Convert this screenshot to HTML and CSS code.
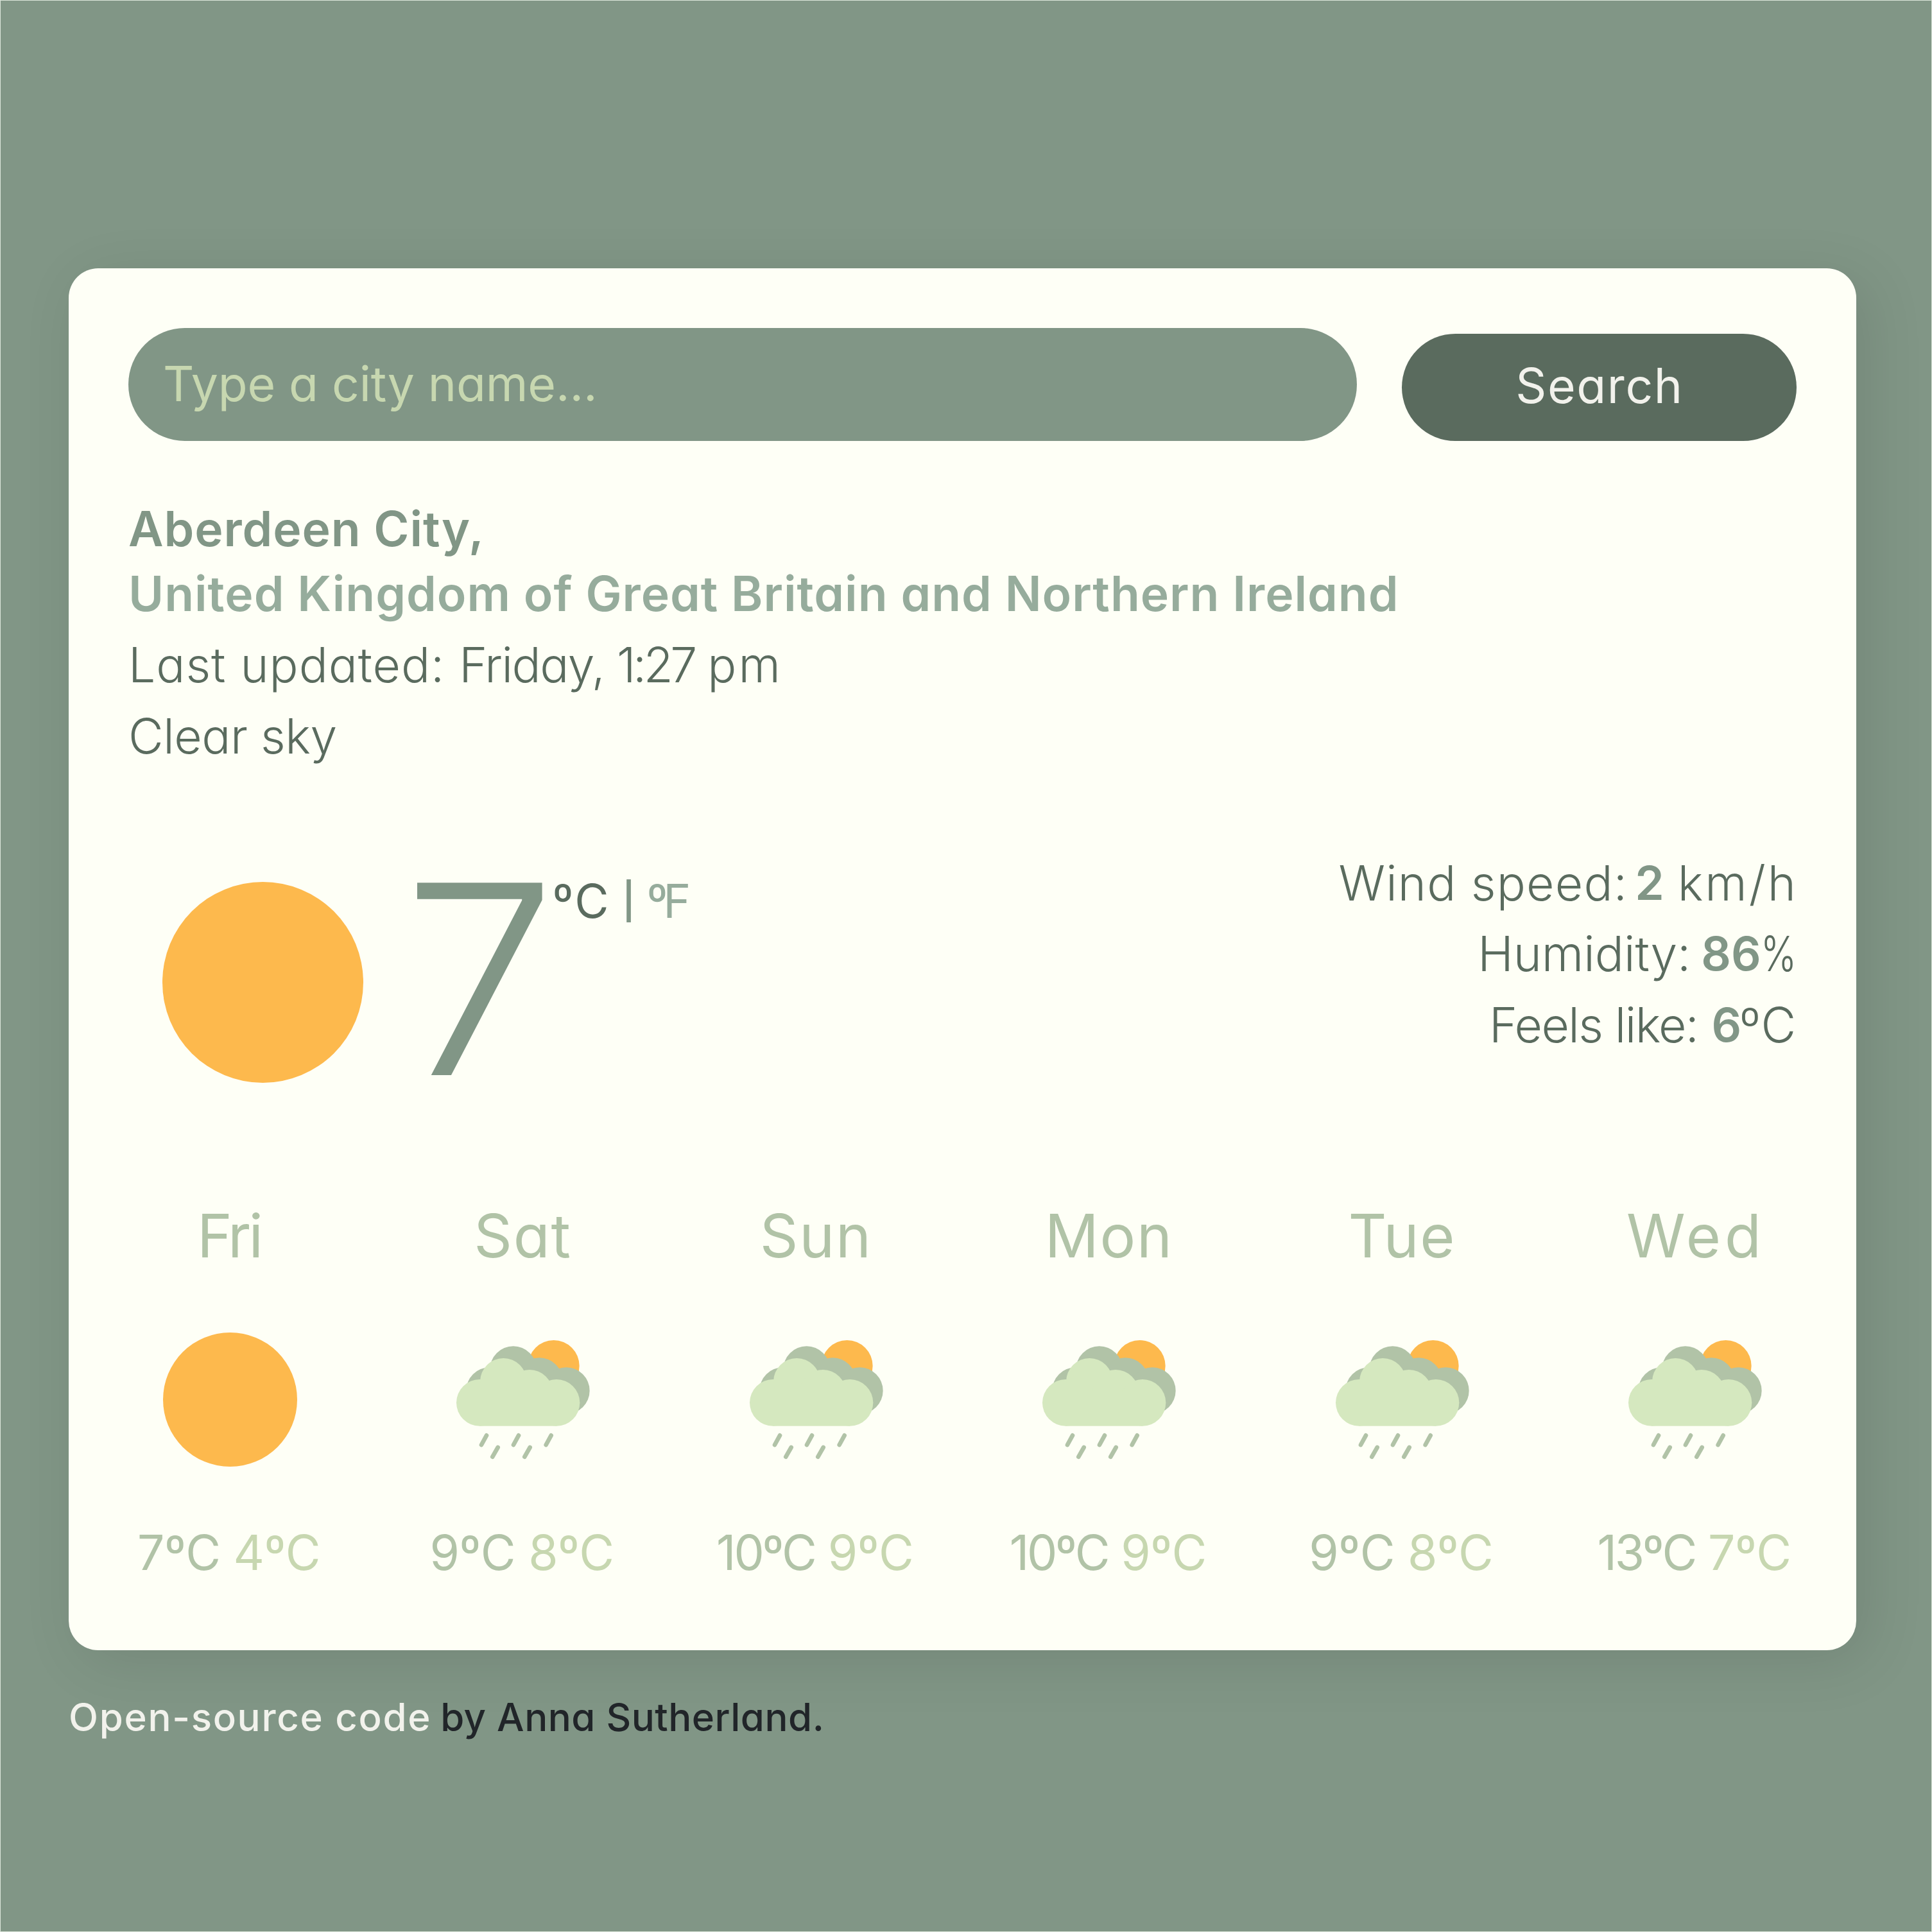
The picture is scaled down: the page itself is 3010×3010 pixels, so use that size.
FILE: index.html
```html
<!DOCTYPE html>
<html lang="en">
<head>
<meta charset="utf-8">
<title>Weather</title>
<link rel="stylesheet" href="styles.css">
</head>
<body>
<svg class="sprite" aria-hidden="true">
  <symbol id="sun" viewBox="0 0 100 100"><circle cx="50" cy="50" r="50" fill="#fdb94d"/></symbol>
  <symbol id="rain" viewBox="0 0 750 660">
    <circle cx="518" cy="174" r="120" fill="#fdb94d"/>
    <g fill="#b1c3a7">
      <circle cx="218" cy="290" r="109"/>
      <circle cx="329" cy="191" r="109"/>
      <circle cx="451" cy="245" r="109"/>
      <circle cx="577" cy="290" r="109"/>
    </g>
    <g fill="#d5e8bf">
      <circle cx="172" cy="346" r="109"/>
      <circle cx="283" cy="247" r="109"/>
      <circle cx="405" cy="301" r="109"/>
      <circle cx="531" cy="346" r="109"/>
      <rect x="172" y="300" width="359" height="155"/>
    </g>
    <path d="M204 499l-24 44M354 499l-24 44M506 499l-24 44M257 555l-25 44M407 555l-25 44" stroke="#b1c3a7" stroke-width="20" stroke-linecap="round"/>
  </symbol>
</svg>
<main class="card">
  <form class="search">
    <input class="search-input" type="text" placeholder="Type a city name...">
    <button class="search-button" type="button">Search</button>
  </form>
  <section class="place">
    <h1 class="city">Aberdeen City,</h1>
    <h2 class="country">United Kingdom of Great Britain and Northern Ireland</h2>
    <p class="detail"><span class="prefix">Last updated: </span><span class="weekday">Friday, </span><span class="time">1:27</span> <span class="meridiem">pm</span></p>
    <p class="detail">Clear sky</p>
  </section>
  <section class="current">
    <svg class="current-icon"><use href="#sun"/></svg>
    <strong class="temperature">7</strong>
    <div class="units"><span class="unit-c">ºC</span><span class="unit-bar">|</span><span class="unit-f">ºF</span></div>
    <ul class="stats">
      <li class="stat wind"><span class="label">Wind speed:</span><b class="value">2</b><span class="unit">km/h</span></li>
      <li class="stat humidity"><span class="label">Humidity:</span><b class="value">86</b><span class="unit">%</span></li>
      <li class="stat feels"><span class="label">Feels like:</span><b class="value">6</b><span class="unit">ºC</span></li>
    </ul>
  </section>
  <section class="forecast">
    <div class="day"><h3 class="name narrow">Fri</h3><svg class="icon icon-sun"><use href="#sun"/></svg><p class="range"><span>7ºC</span><span class="low">4ºC</span></p></div>
    <div class="day"><h3 class="name">Sat</h3><svg class="icon"><use href="#rain"/></svg><p class="range"><span>9ºC</span><span class="low">8ºC</span></p></div>
    <div class="day"><h3 class="name">Sun</h3><svg class="icon"><use href="#rain"/></svg><p class="range"><span class="double">10ºC</span><span class="low">9ºC</span></p></div>
    <div class="day"><h3 class="name">Mon</h3><svg class="icon"><use href="#rain"/></svg><p class="range"><span class="double">10ºC</span><span class="low">9ºC</span></p></div>
    <div class="day"><h3 class="name">Tue</h3><svg class="icon"><use href="#rain"/></svg><p class="range"><span>9ºC</span><span class="low">8ºC</span></p></div>
    <div class="day"><h3 class="name wide">Wed</h3><svg class="icon"><use href="#rain"/></svg><p class="range"><span class="double">13ºC</span><span class="low">7ºC</span></p></div>
  </section>
</main>
<footer class="credit"><a class="source">Open-source code</a><span class="author">by Anna Sutherland.</span></footer>
</body>
</html>
```
FILE: styles.css
```css
* { box-sizing: border-box; margin: 0; padding: 0; }
html { height: 100%; }
body {
  min-height: 100%;
  padding: 416.5px 117px 0 106px;
  border: 1px solid #dbe5db;
  background: #819686;
  font-family: Inter, sans-serif;
  font-feature-settings: "cv11";
  font-size: 75px;
  overflow: hidden;
}
.sprite { position: absolute; width: 0; height: 0; }

.card {
  width: 2785px;
  height: 2153px;
  padding: 93px;
  border-radius: 46px;
  background: #fefff6;
  box-shadow: 18px 18px 92px rgba(0, 0, 0, .1);
}

.search { display: flex; align-items: flex-end; gap: 70px; height: 176px; }
.search-input, .search-button {
  border: 0;
  font: 400 75px Inter, sans-serif;
  font-feature-settings: "cv11";
}
.search-input {
  flex: 1;
  height: 176px;
  padding: 0 0 2px 54px;
  border-radius: 88px;
  background: #819686;
  letter-spacing: -.1px;
}
.search-input::placeholder { color: #c7d7b0; }
.search-button {
  width: 615px;
  height: 167px;
  padding: 0 0 6px 1px;
  border-radius: 84px;
  background: #5a6b5e;
  color: #f2f2ec;
  letter-spacing: 1.6px;
}

.place { margin-top: 86px; }
.city, .country { font-size: 75px; font-weight: 590; line-height: 101.5px; }
.city { color: #819686; letter-spacing: .9px; }
.country { color: #96ac9c; letter-spacing: .97px; }
.detail { color: #5a6b5e; font-weight: 290; line-height: 111px; letter-spacing: -.45px; }
.country + .detail { margin-top: 4px; }
.prefix { letter-spacing: .95px; }
.weekday { letter-spacing: -1.5px; }
.time { letter-spacing: -4.5px; }
.meridiem { letter-spacing: 3px; }

.current { display: flex; align-items: flex-start; height: 367px; margin-top: 119px; }
.current-icon { width: 313px; height: 313px; margin: 53px 66px 0 53px; }
.temperature {
  width: 228.5px;
  margin-top: 54px;
  color: #819686;
  font-size: 412px;
  font-weight: 300;
  line-height: 300px;
  transform: scaleX(1.04);
}
.units { display: flex; margin-top: 33px; font-size: 73px; font-weight: 400; line-height: 100px; color: #819686; }
.unit-c { width: 95px; color: #5a6b5e; letter-spacing: 2px; }
.unit-bar { width: 48px; text-align: center; font-size: 56px; font-weight: 600; }
.unit-f { margin-left: 4px; color: #96ac9c; letter-spacing: -7px; }
.stats { margin-left: auto; list-style: none; color: #5a6b5e; font-weight: 290; line-height: 110.5px; }
.stat { display: flex; justify-content: flex-end; }
.value { color: #819686; font-size: 73px; font-weight: 620; }
.wind { margin-right: -2px; }
.wind .label { letter-spacing: 1.2px; }
.wind .value { margin: 0 21px 0 11px; }
.wind .unit { letter-spacing: 3px; }
.humidity .label { letter-spacing: 0; }
.humidity .value { margin-left: 16px; }
.humidity .unit { margin-left: -15px; transform: scaleX(.8); transform-origin: right; }
.feels .label { letter-spacing: -1.6px; }
.feels .value { margin: 0 -3px 0 21px; }
.feels .unit { letter-spacing: 1px; }

.forecast { display: flex; justify-content: space-between; margin-top: 187px; }
.day { display: flex; flex-direction: column; align-items: center; width: 316px; }
.name {
  height: 195.5px;
  color: #b1c3a7;
  font-size: 93px;
  font-weight: 370;
  line-height: 100px;
  letter-spacing: 1.8px;
}
.narrow { padding-right: 3px; letter-spacing: -4px; }
.wide { padding-left: 2px; letter-spacing: 6px; }
.icon { width: 250px; height: 220px; margin-left: 1px; }
.icon-sun { width: 209px; height: 209px; margin: 6px 0 5px; }
.range {
  display: flex;
  gap: 20px;
  margin: 79px 0 0 -3px;
  color: #b1c3a7;
  font-size: 75px;
  font-weight: 380;
  line-height: 100px;
  letter-spacing: -.5px;
  white-space: nowrap;
}
.low { color: #c7d7b0; }
.double { letter-spacing: -3.2px; }

.credit { display: flex; gap: 14px; margin-top: 65px; font-size: 60px; font-weight: 450; line-height: 79px; }
.source { color: #f2f2ec; letter-spacing: 1.7px; }
.author { color: #212529; letter-spacing: .5px; }
```
